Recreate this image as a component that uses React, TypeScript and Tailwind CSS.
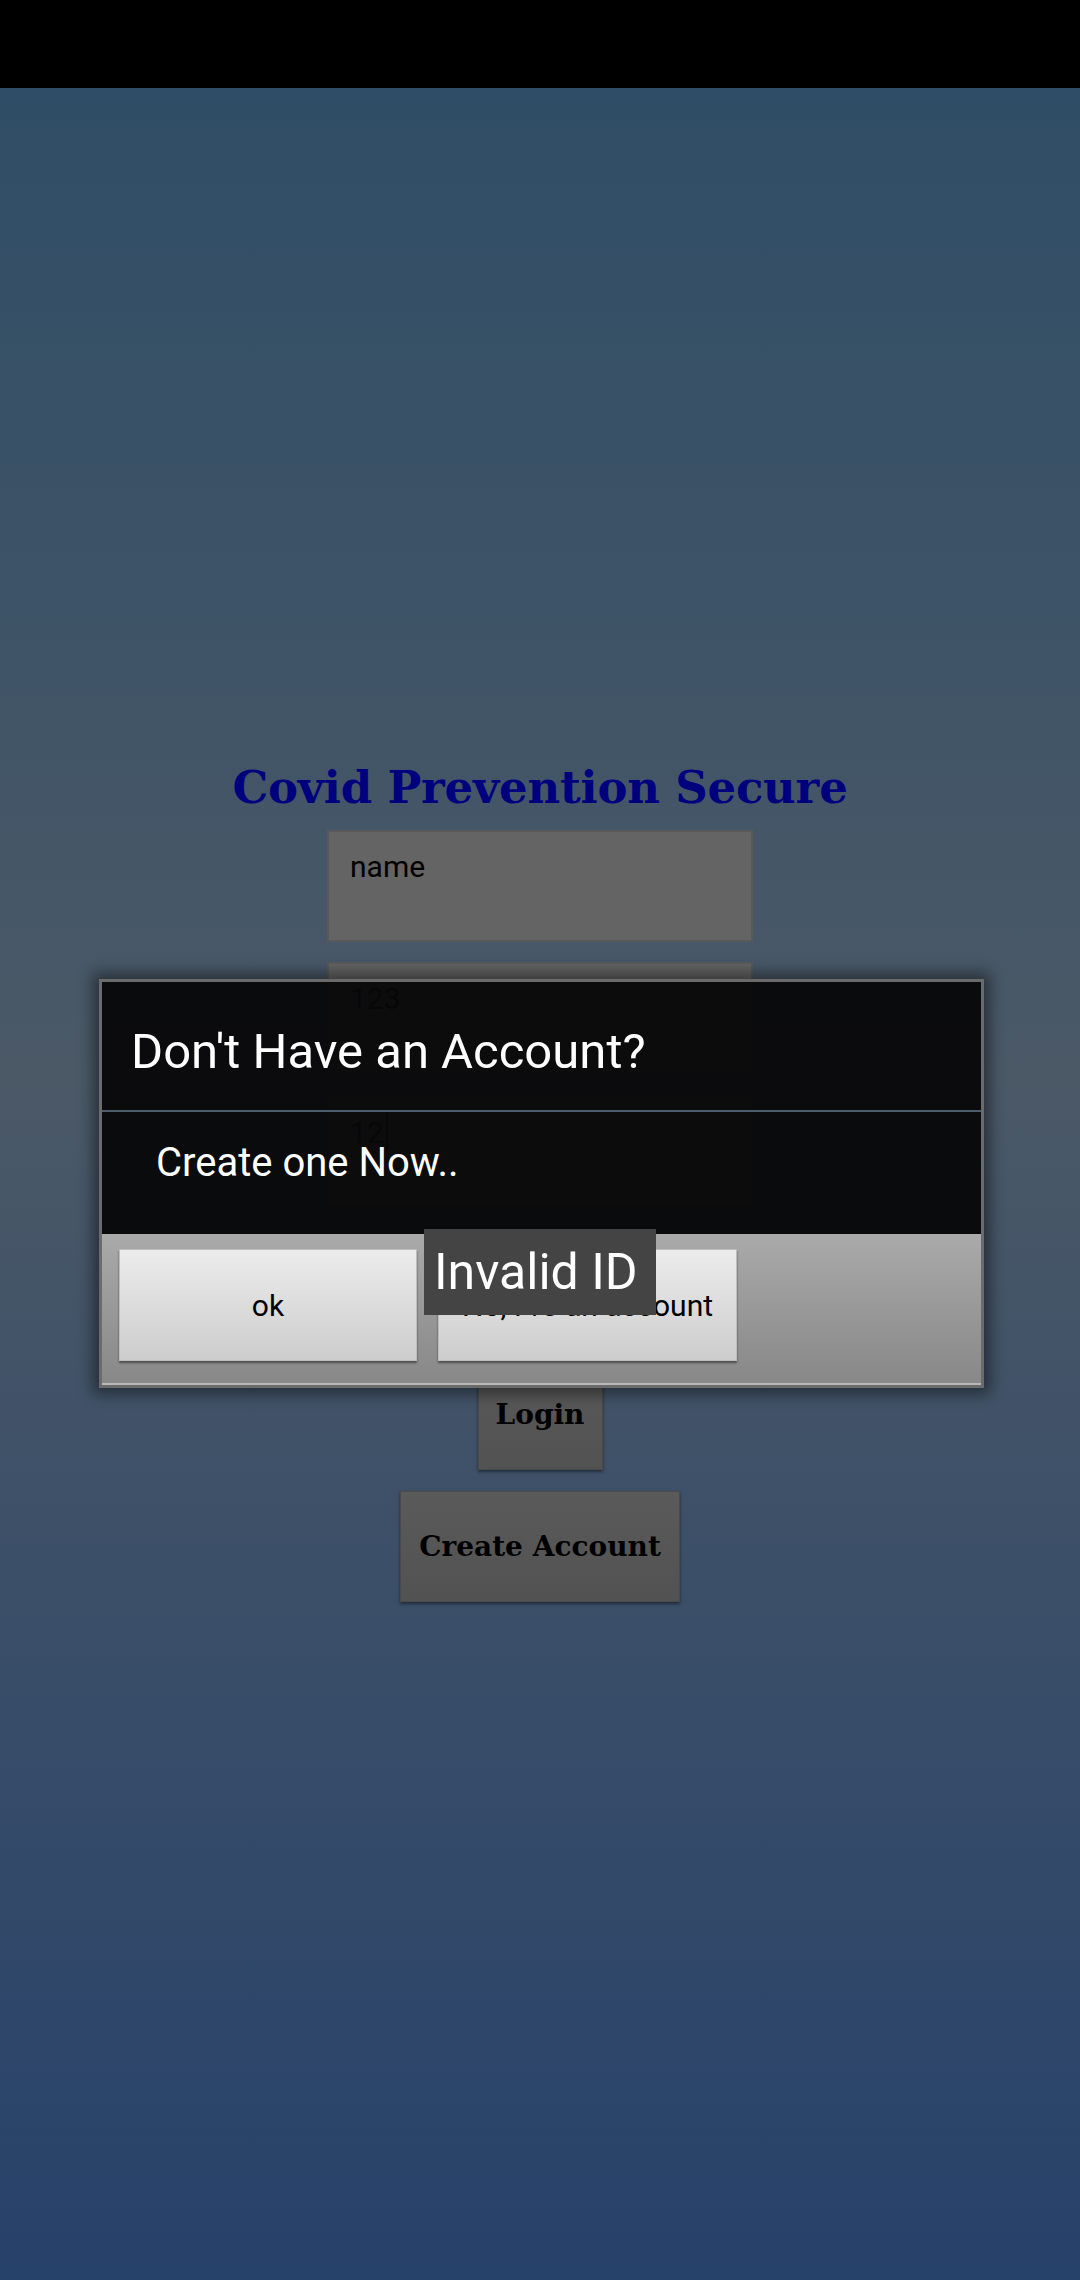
const serif = "font-['DejaVu_Serif',serif]";
const sans = "font-['Roboto',sans-serif]";

const Field = ({ value, cursor }: { value: string; cursor?: boolean }) => (
  <div className={`w-[426px] h-[112px] bg-[#646464] border-2 border-[#595959] pl-[21px] pt-[17px] text-[30px] leading-[35px] text-black ${sans}`}>
    <span>{value}</span>
    {cursor && <span className="inline-block w-[2px] h-[38px] bg-[#111] align-[-8px] ml-[2px]" />}
  </div>
);

export default function App() {
  return (
    <div className="w-[1080px] h-[2280px] flex flex-col overflow-hidden">
      <div className="h-[88px] bg-black shrink-0" />
      <div className="relative flex-1 bg-[linear-gradient(180deg,#2f4d66_0%,#4b5967_45%,#26416a_100%)]">
        <div className="flex flex-col items-center pt-[672px]">
          <h1 className={`${serif} font-bold text-[45px] leading-[56px] text-[#00007f] tracking-[-0.2px]`}>
            Covid Prevention Secure
          </h1>
          <div className="mt-[14px] flex flex-col gap-[20px]">
            <Field value="name" />
            <Field value="123" />
            <Field value="12" cursor />
          </div>
          <button className={`mt-[153px] w-[125px] h-[111px] bg-gradient-to-b from-[#5a5a5a] to-[#525252] border border-[#4a4a4a] shadow-[0_2px_3px_rgba(0,0,0,0.45)] ${serif} font-bold text-[28px] text-black`}>
            Login
          </button>
          <button className={`mt-[21px] w-[280px] h-[111px] bg-gradient-to-b from-[#5a5a5a] to-[#525252] border border-[#4a4a4a] shadow-[0_2px_3px_rgba(0,0,0,0.45)] ${serif} font-bold text-[28px] text-black`}>
            Create Account
          </button>
        </div>

        {/* alert dialog */}
        <div className="absolute left-[99px] top-[891px] w-[885px] h-[409px] border-[3px] border-[#6b6b6b] shadow-[0_0_14px_6px_rgba(0,0,0,0.45)] flex flex-col">
          <div className="flex-1 flex flex-col bg-[rgba(7,7,8,0.95)]">
            <div className={`h-[128px] pl-[29px] pt-[42px] text-[49px] leading-[56px] text-white ${sans}`}>
              Don't Have an Account?
            </div>
            <div className="h-[2px] bg-[#4e5d6b]" />
            <div className={`flex-1 pl-[54px] pt-[27px] text-[40px] leading-[47px] text-white ${sans}`}>
              Create one Now..
            </div>
          </div>
          <div className="h-[151px] bg-gradient-to-b from-[#aaaaaa] to-[#888888] border-b-2 border-[#b8b8b8] flex gap-[21px] pl-[17px] pt-[15px]">
            <button className={`w-[298px] h-[112px] bg-gradient-to-b from-[#ececec] to-[#cdcdcd] border border-[#bdbdbd] shadow-[0_2px_2px_rgba(0,0,0,0.45)] text-[30px] text-black ${sans}`}>
              ok
            </button>
            <button className={`w-[299px] h-[112px] bg-gradient-to-b from-[#ececec] to-[#cdcdcd] border border-[#bdbdbd] shadow-[0_2px_2px_rgba(0,0,0,0.45)] text-[30px] text-black ${sans}`}>
              No, I've an account
            </button>
          </div>
        </div>

        {/* toast */}
        <div className={`absolute left-[424px] top-[1141px] w-[232px] h-[86px] bg-[#444444] pl-[10px] pt-[14px] text-[50px] leading-[58px] text-white ${sans}`}>
          Invalid ID
        </div>
      </div>
    </div>
  );
}
